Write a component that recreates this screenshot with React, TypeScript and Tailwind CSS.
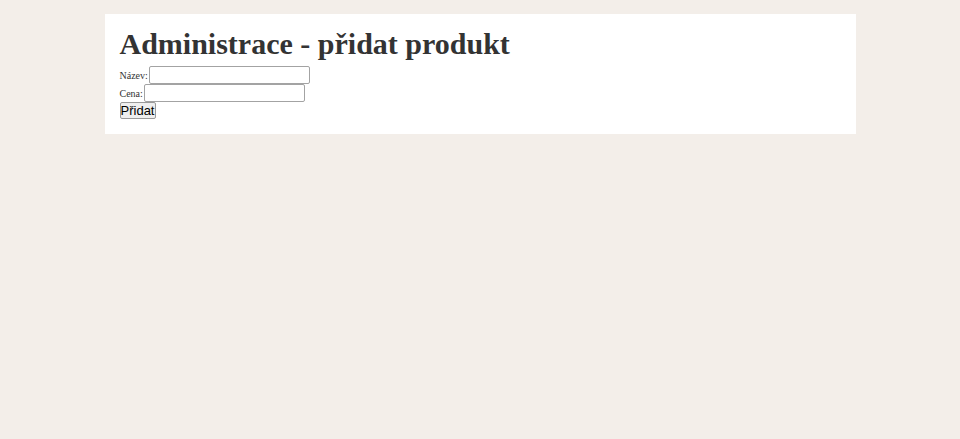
export default function App() {
  return (
    <div className="min-h-[439px] w-full bg-[#f3eee9] pt-[14px]" style={{ fontFamily: '"Liberation Serif", serif' }}>
      <div className="mx-auto w-[751px] bg-white px-[15px] pt-[10px] pb-[15px] text-[#333]">
        <h1 className="text-[30px] font-bold leading-[39px] m-0 mb-[3px]" style={{ fontFamily: '"Liberation Serif", serif' }}>
          Administrace - přidat produkt
        </h1>
        <form className="flex flex-col">
          <div className="flex items-baseline h-[18px]">
            <label className="text-[10px] leading-[12px] mr-[1px]">Název:</label>
            <input type="text" className="w-[161px] h-[18px] border border-[#a3a3a3] rounded-[2px] bg-white text-[11px] px-[2px]" />
          </div>
          <div className="flex items-baseline h-[18px]">
            <label className="text-[10px] leading-[12px] mr-[1px]">Cena:</label>
            <input type="text" className="w-[161px] h-[18px] border border-[#a3a3a3] rounded-[2px] bg-white text-[11px] px-[2px]" />
          </div>
          <div className="flex h-[17px]">
            <button type="button" className="h-[17px] w-[36px] px-0 border border-[#9a9a9a] rounded-[2px] bg-[#efefef] text-[13px] leading-[14px] text-black" style={{ fontFamily: '"Liberation Sans", Arial, sans-serif' }}>
              Přidat
            </button>
          </div>
        </form>
      </div>
    </div>
  );
}
